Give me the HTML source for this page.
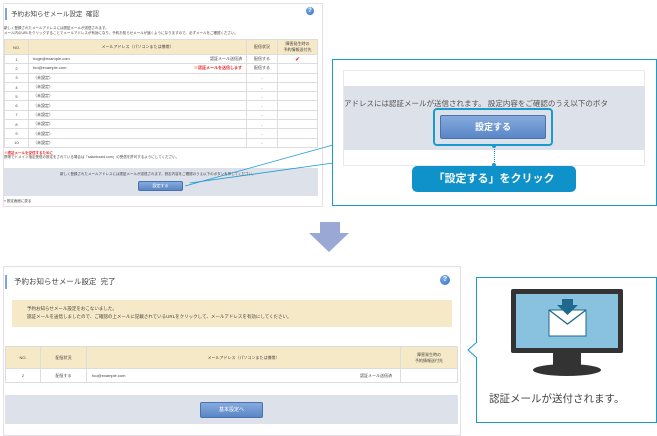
<!DOCTYPE html>
<html><head><meta charset="utf-8"><style>
*{margin:0;padding:0;box-sizing:border-box}
body{width:657px;height:432px;background:#fff;position:relative;overflow:hidden;font-family:"Liberation Sans","Noto Sans CJK JP",sans-serif;color:#333}
.a{position:absolute}
.t{font-size:4px;white-space:nowrap;color:#444}
table{border-collapse:collapse;position:absolute}
td{border:1px solid #ddd;font-size:4px;text-align:center;color:#444;padding:0}
.hd td{background:#f6e9c7;border-color:#ddd}
.q{border-radius:50%;background:radial-gradient(circle at 40% 35%,#7fb0e8,#2d6cc0);color:#fff;font-weight:bold;text-align:center}
.btn{background:linear-gradient(#86abdd,#5a86c6);border:1px solid #4a72ae;color:#fff;text-align:center;border-radius:2px}
</style></head><body>

<!-- top panel -->
<div class="a" style="left:3px;top:3px;width:320px;height:204px;border:1px solid #e6e0e4"></div>
<div class="a" style="left:5px;top:8px;width:2px;height:12px;background:#7fa6d8"></div>
<div class="a" style="left:11px;top:8px;font-size:6.5px;color:#444">予約お知らせメール設定&nbsp; 確認</div>
<div class="a q" style="left:306px;top:7px;width:8px;height:8px;font-size:6px;line-height:8px">?</div>
<div class="a t" style="left:4px;top:26px;font-size:3.5px">新しく登録されたメールアドレスには認証メールが送信されます。</div>
<div class="a t" style="left:4px;top:31px;font-size:3.5px">メール内のURLをクリックすることでメールアドレスが有効になり、予約お知らせメールが届くようになりますので、必ずメールをご確認ください。</div>
<table style="left:4px;top:39px;width:314px">
<tr class="hd" style="height:15px"><td style="width:24px">NO.</td><td>メールアドレス（パソコンまたは携帯）</td><td style="width:31px">配信状況</td><td style="width:40px">障害発生時の<br>予約情報送付先</td></tr>
<tr style="height:9.3px"><td>1</td><td style="text-align:left;padding-left:4px">hoge@example.com<span style="float:right;padding-right:4px">認証メール送信済</span></td><td>配信する</td><td style="color:#d22;font-size:6px">✔</td></tr>
<tr style="height:9.3px"><td>2</td><td style="text-align:left;padding-left:4px">foo@example.com<span style="float:right;padding-right:4px;color:#e22;font-weight:bold">※認証メールを送信します</span></td><td>配信する</td><td></td></tr>
<tr style="height:9.3px"><td>3</td><td style="text-align:left;padding-left:4px">（未設定）</td><td>-</td><td></td></tr>
<tr style="height:9.3px"><td>4</td><td style="text-align:left;padding-left:4px">（未設定）</td><td>-</td><td></td></tr>
<tr style="height:9.3px"><td>5</td><td style="text-align:left;padding-left:4px">（未設定）</td><td>-</td><td></td></tr>
<tr style="height:9.3px"><td>6</td><td style="text-align:left;padding-left:4px">（未設定）</td><td>-</td><td></td></tr>
<tr style="height:9.3px"><td>7</td><td style="text-align:left;padding-left:4px">（未設定）</td><td>-</td><td></td></tr>
<tr style="height:9.3px"><td>8</td><td style="text-align:left;padding-left:4px">（未設定）</td><td>-</td><td></td></tr>
<tr style="height:9.3px"><td>9</td><td style="text-align:left;padding-left:4px">（未設定）</td><td>-</td><td></td></tr>
<tr style="height:9.3px"><td>10</td><td style="text-align:left;padding-left:4px">（未設定）</td><td>-</td><td></td></tr>
</table>
<div class="a t" style="left:4px;top:151px;font-size:3.5px;color:#e22;font-weight:bold">※認証メールを受信するために</div>
<div class="a t" style="left:4px;top:155px;font-size:3.5px">携帯でドメイン指定受信の設定をされている場合は「salonboard.com」の受信を許可するようにしてください。</div>
<div class="a" style="left:4px;top:168px;width:314px;height:28px;background:#dde1e9"></div>
<div class="a t" style="left:60px;top:172px;font-size:3.5px">新しく登録されたメールアドレスには認証メールが送信されます。設定内容をご確認のうえ以下のボタンを押してください。</div>
<div class="a btn" style="left:138px;top:181px;width:45px;height:10px;font-size:4px;line-height:8px">設定する</div>
<div class="a t" style="left:4px;top:199px;font-size:3.5px">« 設定画面に戻る</div>

<!-- connector lines -->
<svg class="a" style="left:0;top:0" width="657" height="432">
<line x1="185" y1="186" x2="333" y2="145" stroke="#1a9bd0" stroke-width="0.8"/>
<line x1="190" y1="183" x2="333" y2="163" stroke="#1a9bd0" stroke-width="0.8"/>
<polygon points="320,222 340,222 340,233 349,233 329,252 309,233 320,233" fill="#9aa8d6"/>
</svg>

<!-- callout zoom -->
<div class="a" style="left:332px;top:59px;width:325px;height:147px;border:1px solid #1a9bd0;background:#fff"></div>
<div class="a" style="left:343px;top:70px;width:302px;height:96px;border:1px solid #ece8ea;background:#fff"></div>
<div class="a" style="left:344px;top:86px;width:301px;height:64px;background:#dde1e9"></div>
<div class="a" style="left:344px;top:98px;font-size:7.5px;color:#555;white-space:nowrap;width:301px;overflow:hidden">アドレスには認証メールが送信されます。 設定内容をご確認のうえ以下のボタ</div>
<div class="a" style="left:433px;top:108px;width:120px;height:38px;border:2px solid #1a9bd0;border-radius:4px"></div>
<div class="a btn" style="left:440px;top:115px;width:106px;height:24px;font-size:9px;line-height:22px;font-weight:bold">設定する</div>
<div class="a" style="left:494px;top:146px;height:20px;border-left:1px dotted #1a9bd0"></div>
<div class="a" style="left:492px;top:144px;width:4px;height:4px;border-radius:50%;background:#1a9bd0"></div>
<div class="a" style="left:492px;top:163px;width:4px;height:4px;border-radius:50%;background:#1a9bd0"></div>
<div class="a" style="left:412px;top:166px;width:164px;height:26px;background:#0f92c9;border-radius:5px;color:#fff;font-size:11px;font-weight:bold;text-align:center;line-height:26px">「設定する」をクリック</div>

<!-- bottom panel -->
<div class="a" style="left:3px;top:266px;width:458px;height:170px;border:1px solid #e6e0e4"></div>
<div class="a" style="left:5px;top:275px;width:2px;height:14px;background:#7fa6d8"></div>
<div class="a" style="left:14px;top:276px;font-size:7.5px;color:#444">予約お知らせメール設定&nbsp; 完了</div>
<div class="a q" style="left:440px;top:275px;width:10px;height:10px;font-size:7px;line-height:10px">?</div>
<div class="a" style="left:12px;top:300px;width:440px;height:27px;background:#f6e9c7"></div>
<div class="a t" style="left:27px;top:306px;font-size:4.5px">予約お知らせメール設定をおこないました。</div>
<div class="a t" style="left:27px;top:314px;font-size:4.5px">認証メールを送信しましたので、ご確認の上メールに記載されているURLをクリックして、メールアドレスを有効にしてください。</div>
<table style="left:5px;top:346px;width:453px">
<tr class="hd" style="height:22px"><td style="width:35px">NO.</td><td style="width:46px">配信状況</td><td>メールアドレス（パソコンまたは携帯）</td><td style="width:57px">障害発生時の<br>予約情報送付先</td></tr>
<tr style="height:14px"><td>2</td><td>配信する</td><td style="text-align:left;padding-left:5px">foo@example.com<span style="float:right;padding-right:8px">認証メール送信済</span></td><td></td></tr>
</table>
<div class="a" style="left:5px;top:395px;width:453px;height:29px;background:#dde1e9"></div>
<div class="a btn" style="left:200px;top:402px;width:63px;height:16px;font-size:5px;line-height:14px">基本設定へ</div>

<!-- right callout -->
<div class="a" style="left:476px;top:277px;width:181px;height:146px;border:1px solid #1a9bd0;background:#fff"></div>
<svg class="a" style="left:466px;top:340px" width="12" height="20"><polyline points="11,2 2,10 11,18" fill="#fff" stroke="#1a9bd0" stroke-width="1"/></svg>
<svg class="a" style="left:510px;top:288px" width="115" height="92">
<rect x="1" y="1" width="112" height="64" rx="2" fill="#333"/>
<rect x="6" y="6" width="102" height="54" fill="#89c2df"/>
<rect x="39" y="22" width="37" height="26" fill="#fff" stroke="#1f6a8c" stroke-width="1"/>
<polyline points="39,22 57.5,36 76,22" fill="none" stroke="#1f6a8c" stroke-width="1.3"/>
<polygon points="52,11 63,11 63,17 68,17 57.5,27 47,17 52,17" fill="#1f6a8c"/>
<rect x="43" y="65" width="28" height="13" fill="#333"/>
<ellipse cx="57" cy="82" rx="34" ry="6" fill="#333"/>
</svg>
<div class="a" style="left:489px;top:391px;font-size:10.5px;color:#444;white-space:nowrap">認証メールが送付されます。</div>
</body></html>
